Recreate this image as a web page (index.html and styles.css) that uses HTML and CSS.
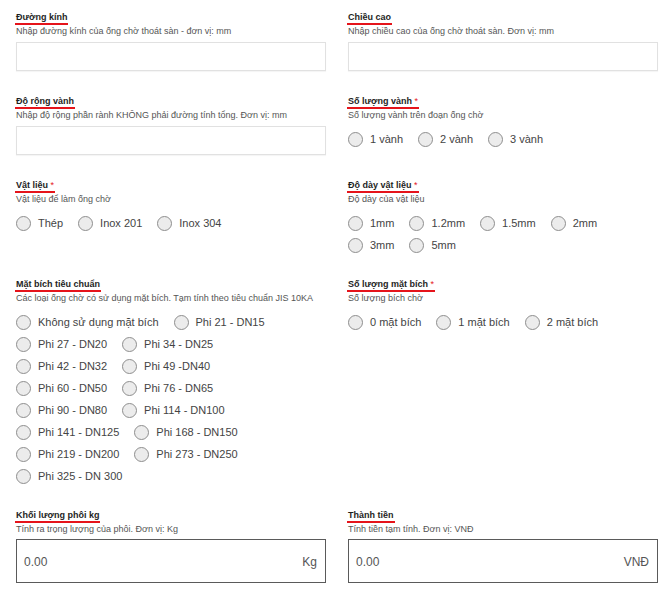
FILE: index.html
```html
<!DOCTYPE html>
<html lang="vi">
<head>
<meta charset="utf-8">
<title>Form</title>
<link rel="stylesheet" href="styles.css">
</head>
<body>
<form class="form">
  <div class="field">
    <div class="label">Đường kính</div>
    <div class="desc">Nhập đường kính của ống chờ thoát sàn - đơn vị: mm</div>
    <div class="input"></div>
  </div>
  <div class="field">
    <div class="label">Chiều cao</div>
    <div class="desc">Nhập chiều cao của ống chờ thoát sàn. Đơn vị: mm</div>
    <div class="input"></div>
  </div>

  <div class="field">
    <div class="label">Độ rộng vành</div>
    <div class="desc">Nhập độ rộng phần rành KHÔNG phải đường tính tổng. Đơn vị: mm</div>
    <div class="input"></div>
  </div>
  <div class="field">
    <div class="label">Số lượng vành <span class="req">*</span></div>
    <div class="desc">Số lượng vành trên đoạn ống chờ</div>
    <div class="radios">
      <div class="radio"><span class="dot"></span>1 vành</div>
      <div class="radio"><span class="dot"></span>2 vành</div>
      <div class="radio"><span class="dot"></span>3 vành</div>
    </div>
  </div>

  <div class="field">
    <div class="label">Vật liệu <span class="req">*</span></div>
    <div class="desc">Vật liệu để làm ống chờ</div>
    <div class="radios">
      <div class="radio"><span class="dot"></span>Thép</div>
      <div class="radio"><span class="dot"></span>Inox 201</div>
      <div class="radio"><span class="dot"></span>Inox 304</div>
    </div>
  </div>
  <div class="field">
    <div class="label">Độ dày vật liệu <span class="req">*</span></div>
    <div class="desc">Độ dày của vật liệu</div>
    <div class="radios narrow">
      <div class="radio"><span class="dot"></span>1mm</div>
      <div class="radio"><span class="dot"></span>1.2mm</div>
      <div class="radio"><span class="dot"></span>1.5mm</div>
      <div class="radio"><span class="dot"></span>2mm</div>
      <div class="radio"><span class="dot"></span>3mm</div>
      <div class="radio"><span class="dot"></span>5mm</div>
    </div>
  </div>

  <div class="field">
    <div class="label">Mặt bích tiêu chuẩn</div>
    <div class="desc">Các loại ống chờ có sử dụng mặt bích. Tạm tính theo tiêu chuẩn JIS 10KA</div>
    <div class="radios narrow">
      <div class="radio"><span class="dot"></span>Không sử dụng mặt bích</div>
      <div class="radio"><span class="dot"></span>Phi 21 - DN15</div>
      <div class="radio"><span class="dot"></span>Phi 27 - DN20</div>
      <div class="radio"><span class="dot"></span>Phi 34 - DN25</div>
      <div class="radio"><span class="dot"></span>Phi 42 - DN32</div>
      <div class="radio"><span class="dot"></span>Phi 49 -DN40</div>
      <div class="radio"><span class="dot"></span>Phi 60 - DN50</div>
      <div class="radio"><span class="dot"></span>Phi 76 - DN65</div>
      <div class="radio"><span class="dot"></span>Phi 90 - DN80</div>
      <div class="radio"><span class="dot"></span>Phi 114 - DN100</div>
      <div class="radio"><span class="dot"></span>Phi 141 - DN125</div>
      <div class="radio"><span class="dot"></span>Phi 168 - DN150</div>
      <div class="radio"><span class="dot"></span>Phi 219 - DN200</div>
      <div class="radio"><span class="dot"></span>Phi 273 - DN250</div>
      <div class="radio"><span class="dot"></span>Phi 325 - DN 300</div>
    </div>
  </div>
  <div class="field">
    <div class="label">Số lượng mặt bích <span class="req">*</span></div>
    <div class="desc">Số lượng bích chờ</div>
    <div class="radios">
      <div class="radio"><span class="dot"></span>0 mặt bích</div>
      <div class="radio"><span class="dot"></span>1 mặt bích</div>
      <div class="radio"><span class="dot"></span>2 mặt bích</div>
    </div>
  </div>

  <div class="field">
    <div class="label">Khối lượng phôi kg</div>
    <div class="desc">Tính ra trọng lượng của phôi. Đơn vị: Kg</div>
    <div class="output"><span>0.00</span><span>Kg</span></div>
  </div>
  <div class="field">
    <div class="label">Thành tiền</div>
    <div class="desc">Tính tiền tạm tính. Đơn vị: VNĐ</div>
    <div class="output"><span>0.00</span><span>VNĐ</span></div>
  </div>
</form>
</body>
</html>
```

FILE: styles.css
```css
html, body {
  margin: 0;
  padding: 0;
  background: #ffffff;
}
body {
  font-family: "Liberation Sans", Arial, sans-serif;
  color: #333;
}
.form {
  display: grid;
  grid-template-columns: 310px 310px;
  column-gap: 22px;
  row-gap: 24px;
  padding: 11px 0 0 16px;
  align-items: start;
}
.field {
  display: flex;
  flex-direction: column;
  align-items: flex-start;
}
.label {
  font-size: 9px;
  font-weight: bold;
  line-height: 12px;
  color: #1e1e1e;
  border-bottom: 2px solid #e5141b;
  padding: 0 1px;
  margin-left: -1px;
}
.req {
  color: #e5141b;
  font-weight: normal;
}
.desc {
  font-size: 9px;
  line-height: 11px;
  color: #555;
  margin-top: 1px;
  margin-bottom: 5px;
}
.input {
  align-self: stretch;
  height: 29px;
  box-sizing: border-box;
  border: 1px solid #e1e1e1;
  box-shadow: 0 1px 1px rgba(0, 0, 0, 0.04);
  background: #fff;
}
.radios {
  display: flex;
  flex-wrap: wrap;
  column-gap: 15px;
  align-self: stretch;
}
.radios.narrow {
  max-width: 292px;
}
.radio {
  display: flex;
  align-items: center;
  height: 22px;
  padding-top: 4px;
  box-sizing: border-box;
  font-size: 11px;
  color: #444;
  white-space: nowrap;
}
.dot {
  width: 15px;
  height: 15px;
  box-sizing: border-box;
  border-radius: 50%;
  border: 1px solid #8e8e8e;
  background: #ececec;
  margin-right: 7px;
  flex: none;
}
.output {
  align-self: stretch;
  height: 44px;
  box-sizing: border-box;
  border: 1px solid #5a5a5a;
  display: flex;
  justify-content: space-between;
  align-items: center;
  padding: 1px 8px 0 7px;
  font-size: 12px;
  color: #555;
  margin-top: -1px;
}
```
